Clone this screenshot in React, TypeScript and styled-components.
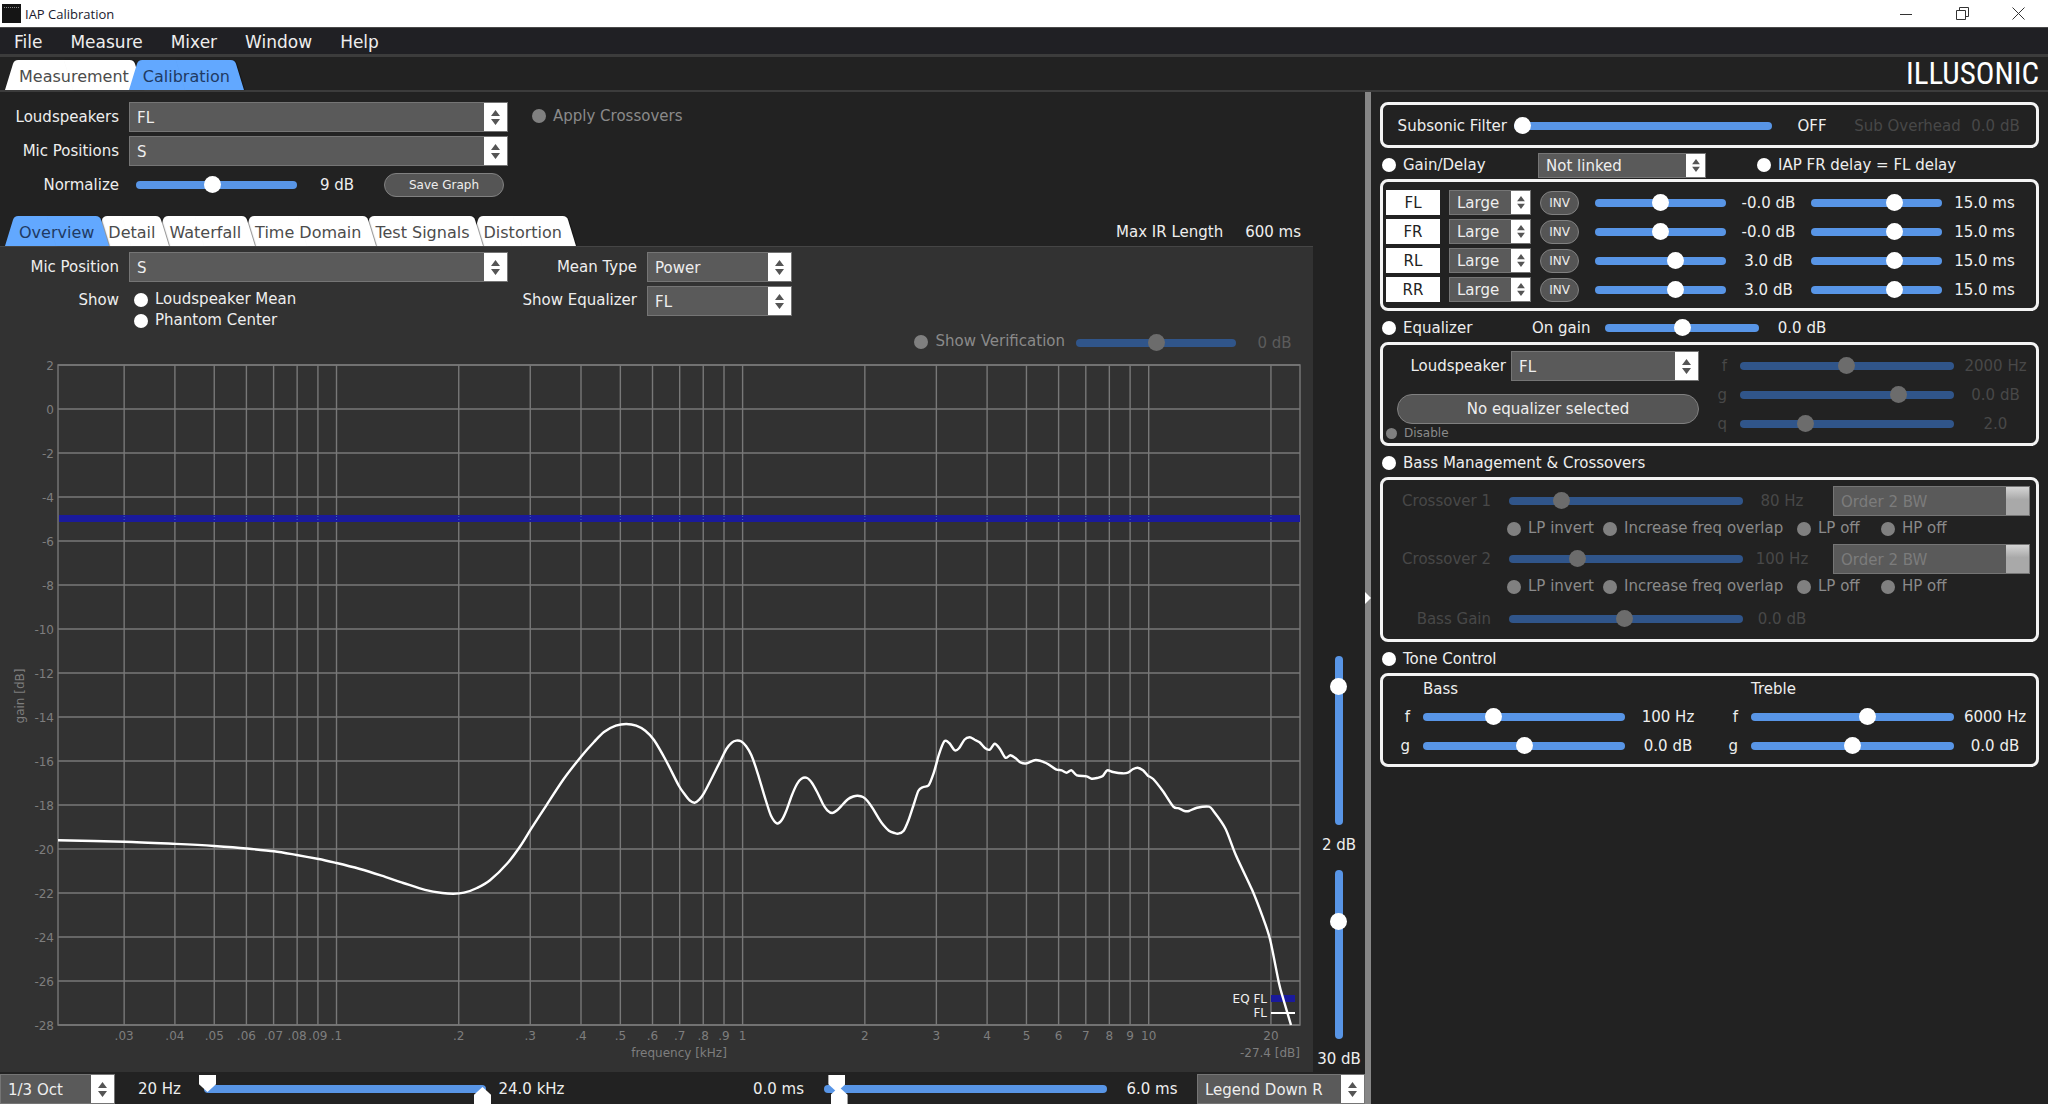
import React, { useId } from "react";
import styled, { createGlobalStyle, css } from "styled-components";

const c = {
  bg: "#222222",
  panel: "#323232",
  line: "#454545",
  field: "#5a5a5a",
  fieldLine: "#757575",
  blue: "#5895e6",
  blueOff: "#30558a",
  tab: "#62a8ff",
  text: "#eeeeee",
  muted: "#8a8a8a",
  faint: "#484848",
};

const GlobalStyle = createGlobalStyle`
  * { box-sizing: border-box; }
  body { margin: 0; background: ${c.bg}; }
  body, button, select, input {
    font-family: "DejaVu Sans", Verdana, sans-serif;
    font-size: 15px;
  }
`;

/* ---------- shell ---------- */

const Window = styled.div`
  display: flex;
  flex-direction: column;
  min-height: 100vh;
  color: ${c.text};
  line-height: 20px;
  white-space: nowrap;
`;

const TitleBar = styled.header`
  display: flex;
  align-items: center;
  height: 27px;
  padding: 0 2px;
  gap: 4px;
  background: #ffffff;
  color: #1a1a2e;
  font-family: "Open Sans", "Noto Sans", sans-serif;
  font-size: 13px;
`;

const WindowButtons = styled.div`
  display: flex;
  margin-left: auto;
`;

const WindowButton = styled.button`
  display: grid;
  place-items: center;
  width: 56px;
  height: 27px;
  padding: 0;
  border: 0;
  background: none;
`;

const MenuBar = styled.nav`
  display: flex;
  height: 30px;
  gap: 28px;
  padding: 2px 0 0 14px;
  background: #202024;
  border-top: 1px solid #4a4a4a;
  border-bottom: 3px solid #3c3c3c;
`;

const MenuButton = styled.button`
  padding: 0;
  border: 0;
  background: none;
  color: ${c.text};
  font-size: 17px;
`;

const Strip = styled.div`
  display: flex;
  align-items: flex-end;
  justify-content: space-between;
  height: 35px;
  border-bottom: 2px solid #3c3c3c;
`;

const Logo = styled.div`
  padding-right: 9px;
  align-self: center;
  color: #ffffff;
  font-family: "Roboto Condensed", "Open Sans Condensed", Lato, sans-serif;
  font-size: 31px;
  line-height: 33px;
`;

const Body = styled.main`
  flex: 1;
  display: grid;
  grid-template-columns: minmax(0, 1fr) 6px 677px;
`;

const Splitter = styled.div`
  display: flex;
  align-items: center;
  background: #868686;
`;

/* ---------- tabs ---------- */

const TabList = styled.div`
  display: flex;
  padding-left: 5px;
`;

const side = css`
  content: "";
  position: absolute;
  z-index: -1;
  top: 0;
  bottom: 0;
  width: 51%;
`;

const TabButton = styled.button<{ $active?: boolean; $order: number }>`
  position: relative;
  z-index: ${(p) => p.$order};
  isolation: isolate;
  height: 30px;
  padding: 3px 14px 0;
  border: 0;
  background: none;
  color: ${(p) => (p.$active ? "#1f3a63" : "#4c4c4c")};
  font-size: 16px;
  & + & { margin-left: -14px; }
  &::before {
    ${side}
    left: 0;
    background: ${(p) => (p.$active ? c.tab : "#ffffff")};
    border-top-left-radius: 4px;
    transform: skewX(-17deg);
    transform-origin: bottom left;
  }
  &::after {
    ${side}
    right: 0;
    background: ${(p) => (p.$active ? c.tab : "#ffffff")};
    border-top-right-radius: 4px;
    box-shadow: 1px 0 1px rgba(0, 0, 0, 0.45);
    transform: skewX(17deg);
    transform-origin: bottom right;
  }
`;

function Tabs({ names, active, label }: { names: string[]; active: string; label: string }) {
  return (
    <TabList role="tablist" aria-label={label}>
      {names.map((n, i) => (
        <TabButton
          key={n}
          role="tab"
          aria-selected={n === active}
          $active={n === active}
          $order={n === active ? names.length + 1 : names.length - i}
        >
          {n}
        </TabButton>
      ))}
    </TabList>
  );
}

/* ---------- controls ---------- */

const SelectBox = styled.span<{ $small?: boolean }>`
  display: grid;
  grid-template-columns: minmax(0, 1fr) ${(p) => (p.$small ? 19 : 23)}px;
  height: ${(p) => (p.$small ? 25 : 30)}px;
  background: ${c.field};
  border: 1px solid ${c.fieldLine};
`;

const NativeSelect = styled.select`
  grid-area: 1 / 1 / 2 / 3;
  min-width: 0;
  padding: 1px 0 0 7px;
  border: 0;
  appearance: none;
  background: none;
  color: ${c.text};
  opacity: 1;
  &:disabled { color: #7c7c7c; }
`;

const Stepper = styled.span<{ $off?: boolean }>`
  grid-area: 1 / 2;
  display: grid;
  place-items: center;
  pointer-events: none;
  background: ${(p) => (p.$off ? "linear-gradient(#d4d4d4, #a9a9a9 45%)" : "#ffffff")};
`;

function Select(p: { id?: string; value: string; label?: string; small?: boolean; disabled?: boolean }) {
  return (
    <SelectBox $small={p.small}>
      <NativeSelect id={p.id} aria-label={p.label} defaultValue={p.value} disabled={p.disabled}>
        <option>{p.value}</option>
      </NativeSelect>
      <Stepper $off={p.disabled}>
        {!p.disabled && (
          <svg width={p.small ? 8 : 9} height={p.small ? 13 : 15} viewBox="0 0 9 15" aria-hidden="true">
            <path d="M0 6 L4.5 0 L9 6Z M0 9 L4.5 15 L9 9Z" fill="#555" />
          </svg>
        )}
      </Stepper>
    </SelectBox>
  );
}

const track = css`
  width: 100%;
  height: 8px;
  border-radius: 4px;
  background: ${c.blue};
`;

const thumb = css`
  appearance: none;
  width: 17px;
  height: 17px;
  border: 0;
  border-radius: 50%;
  background: #ffffff;
`;

const Range = styled.input.attrs({ type: "range", min: 0, max: 1000 })`
  display: block;
  width: 100%;
  height: 18px;
  margin: 0;
  appearance: none;
  background: none;
  &::-webkit-slider-runnable-track { ${track} }
  &::-webkit-slider-thumb { ${thumb} margin-top: -5px; }
  &:disabled::-webkit-slider-runnable-track { background: ${c.blueOff}; }
  &:disabled::-webkit-slider-thumb { background: #6c6c6c; }
`;

const VerticalRange = styled(Range)`
  writing-mode: vertical-lr;
  width: 18px;
  height: 169px;
  &::-webkit-slider-runnable-track { width: 8px; height: 100%; }
  &::-webkit-slider-thumb { margin-top: 0; margin-left: -5px; }
`;

/* two handles share one bar; each handle centres on the bar's end */
const SpanBox = styled.div`
  display: grid;
  align-items: center;
  height: 30px;
  &::before {
    content: "";
    grid-area: 1 / 1;
    ${track}
  }
`;

const SpanRange = styled(Range)<{ $end?: boolean }>`
  grid-area: 1 / 1;
  width: auto;
  height: 30px;
  margin: 0 -5px;
  pointer-events: none;
  &::-webkit-slider-runnable-track { background: none; }
  &::-webkit-slider-thumb {
    pointer-events: auto;
    border-radius: 0;
    margin-top: ${(p) => (p.$end ? 2 : -10)}px;
    clip-path: ${(p) =>
      p.$end
        ? "polygon(50% 0, 100% 45%, 100% 100%, 0 100%, 0 45%)"
        : "polygon(0 0, 100% 0, 100% 55%, 50% 100%, 0 55%)"};
  }
`;

const DotLabel = styled.label<{ $off?: boolean; $small?: boolean }>`
  display: inline-flex;
  align-items: center;
  gap: 7px;
  color: ${(p) => (p.$off ? c.muted : c.text)};
  font-size: ${(p) => (p.$small ? 12 : 15)}px;
  line-height: ${(p) => (p.$small ? 16 : 21)}px;
`;

const Dot = styled.input.attrs({ type: "checkbox" })<{ $small?: boolean }>`
  appearance: none;
  flex: none;
  width: ${(p) => (p.$small ? 11 : 14)}px;
  height: ${(p) => (p.$small ? 11 : 14)}px;
  margin: 0;
  border-radius: 50%;
  background: #ffffff;
  &:disabled { background: #808080; }
`;

function Toggle({ text, off, small }: { text: string; off?: boolean; small?: boolean }) {
  return (
    <DotLabel $off={off} $small={small}>
      <Dot disabled={off} $small={small} />
      {text}
    </DotLabel>
  );
}

const Pill = styled.button<{ $size: "tiny" | "small" | "wide" }>`
  height: ${(p) => (p.$size === "wide" ? 30 : 24)}px;
  padding: 0;
  border: 1px solid #808080;
  border-radius: 15px;
  background: #555555;
  color: ${c.text};
  font-size: ${(p) => (p.$size === "wide" ? 15 : 12)}px;
`;

const Caption = styled.label<{ $faint?: boolean }>`
  text-align: right;
  color: ${(p) => (p.$faint ? c.faint : c.text)};
`;

const Value = styled.output<{ $faint?: boolean }>`
  text-align: center;
  color: ${(p) => (p.$faint ? c.faint : c.text)};
`;

const DimValue = styled(Value)`
  color: #5c5c5c;
`;

/* ---------- left pane ---------- */

const LeftPane = styled.section`
  display: flex;
  flex-direction: column;
  min-width: 0;
`;

const Form = styled.div`
  display: grid;
  grid-template-columns: 119px 379px auto;
  grid-auto-rows: 30px;
  align-items: center;
  gap: 4px 10px;
  padding-top: 10px;
`;

const FormAside = styled.div`
  padding-left: 14px;
`;

const NormalizeRow = styled.div`
  display: grid;
  grid-template-columns: 161px 80px 7px 120px;
  align-items: center;
  padding-left: 7px;
  & > button { grid-column: 4; }
`;

const TabStrip = styled.div`
  display: flex;
  align-items: center;
  justify-content: space-between;
  padding: 16px 64px 0 0;
`;

const IrLength = styled.div`
  display: flex;
  gap: 22px;
  padding-top: 2px;
`;

const Workspace = styled.div`
  display: flex;
`;

const GraphPanel = styled.div`
  flex: 1;
  min-width: 0;
  padding-top: 5px;
  background: ${c.panel};
  border-top: 1px solid ${c.line};
`;

const GraphForm = styled.div`
  display: grid;
  grid-template-columns: 119px 379px 119px 145px;
  align-items: center;
  gap: 4px 10px;
`;

const DotStack = styled.div`
  display: flex;
  flex-direction: column;
  align-items: flex-start;
  padding: 3px 0 0 5px;
`;

const TopAligned = styled.div`
  align-self: start;
  padding-top: 4px;
  text-align: right;
`;

const StartCell = styled.div`
  align-self: start;
`;

const Verification = styled.div`
  display: grid;
  grid-template-columns: auto 160px 77px;
  align-items: center;
  justify-content: end;
  height: 23px;
`;

const VerificationToggle = styled.div`
  padding-right: 11px;
`;

const Chart = styled.svg`
  display: block;
  width: 100%;
  height: auto;
  font-family: "DejaVu Sans", Verdana, sans-serif;
  font-size: 12px;
`;

const ScaleStrip = styled.div`
  display: flex;
  flex-direction: column;
  justify-content: flex-end;
  align-items: center;
  width: 52px;
  padding-bottom: 3px;
`;

const ScaleValue = styled.output`
  padding: 10px 0 15px;
  &:last-child { padding-bottom: 0; }
`;

const BottomBar = styled.div`
  display: grid;
  grid-template-columns: 115px 89px 282px 91px 1fr 91px 283px 90px 168px;
  align-items: center;
  padding-top: 2px;
`;

/* ---------- right pane ---------- */

const RightPane = styled.section`
  display: flex;
  flex-direction: column;
  padding: 10px 9px 0;
`;

const Group = styled.div`
  border: 3px solid #f4f4f4;
  border-radius: 8px;
`;

const SubsonicGroup = styled(Group)`
  display: grid;
  grid-template-columns: 131px 1fr 80px 111px 65px 8px;
  align-items: center;
  padding: 11px 0 9px;
`;

const SubsonicCaption = styled(Caption)`
  padding-right: 7px;
`;

const Head = styled.div<{ $cols?: string }>`
  display: grid;
  grid-template-columns: ${(p) => p.$cols ?? "auto"};
  align-items: center;
  height: 31px;
  padding: 3px 0 0 2px;
`;

const Channels = styled(Group)`
  padding: 6px 0 4px 3px;
`;

const ChannelRow = styled.div`
  display: grid;
  grid-template-columns: 54px 9px 82px 9px 39px 16px 1fr 85px 131px 94px;
  align-items: center;
  height: 29px;
  & > :nth-child(2) { grid-column: 3; }
  & > :nth-child(3) { grid-column: 5; }
  & > :nth-child(4) { grid-column: 7; }
`;

const ChannelName = styled.button`
  height: 25px;
  padding: 0;
  border: 0;
  background: #ffffff;
  color: #222222;
`;

const Delay = styled(Value)`
  padding-right: 9px;
`;

const EqGroup = styled(Group)`
  display: grid;
  grid-template-columns: 316px 1fr;
  padding-top: 6px;
`;

const EqLeft = styled.div`
  display: flex;
  flex-direction: column;
`;

const EqPick = styled.div`
  display: grid;
  grid-template-columns: 123px 188px;
  gap: 5px;
  align-items: center;
`;

const EqButtons = styled.div`
  display: grid;
  padding: 13px 0 1px 14px;
`;

const EqDisable = styled.div`
  display: flex;
  padding: 0 0 2px 3px;
`;

const ParamRow = styled.div`
  display: grid;
  grid-template-columns: 41px 1fr 4px 75px 3px;
  align-items: center;
  height: 29px;
  & > label { padding-right: 13px; }
  & > output { grid-column: 4; }
`;

const CrossRow = styled.div`
  display: grid;
  grid-template-columns: 108px 18px 1fr 78px 12px 197px;
  align-items: center;
  height: 30px;
  & > input { grid-column: 3; }
  & > output { grid-column: 4; }
  & > span { grid-column: 6; }
`;

const BassGroup = styled(Group)`
  padding: 6px 6px 3px 0;
  & > :last-child { height: 34px; }
`;

const DotRow = styled.div`
  display: grid;
  grid-template-columns: 96px 194px 84px 1fr;
  align-items: center;
  height: 28px;
  padding: 0 0 3px 124px;
`;

const ToneGroup = styled(Group)`
  display: grid;
  grid-template-columns: 328px 1fr;
  padding-bottom: 4px;
`;

const ToneTitle = styled.div`
  height: 26px;
  padding: 3px 0 0 40px;
`;

const ToneRow = styled.div<{ $valueWidth: number }>`
  display: grid;
  grid-template-columns: 40px 1fr ${(p) => p.$valueWidth}px;
  align-items: center;
  height: 29px;
  & > label { padding-right: 13px; }
`;

/* ---------- chart data ---------- */

const PLOT = { left: 58, right: 1300, top: 365, bottom: 1025 };
const xOf = (hz: number) => 336.5 + 406.1 * Math.log10(hz / 100);
const yOf = (db: number) => PLOT.top + (2 - db) * 22;

const TICKS: [number, string][] = [
  [30, ".03"], [40, ".04"], [50, ".05"], [60, ".06"], [70, ".07"], [80, ".08"], [90, ".09"], [100, ".1"],
  [200, ".2"], [300, ".3"], [400, ".4"], [500, ".5"], [600, ".6"], [700, ".7"], [800, ".8"], [900, ".9"],
  [1000, "1"], [2000, "2"], [3000, "3"], [4000, "4"], [5000, "5"], [6000, "6"], [7000, "7"], [8000, "8"],
  [9000, "9"], [10000, "10"], [20000, "20"],
];
const LEVELS = Array.from({ length: 16 }, (_, i) => 2 - i * 2);

const RESPONSE: [number, number][] = [
  [58, 840.3], [124, 841.7], [175.6, 843.9], [214, 846], [246.3, 848.5], [274, 851.3], [296.6, 855], [318.7, 859],
  [336.5, 863], [360, 869], [381.6, 875.7], [403.3, 883], [425, 889.9], [442.3, 893], [453.2, 893.7], [464, 892.7],
  [477, 888], [490, 880.3], [507.4, 863.3], [520.4, 846], [531.2, 828.7], [546.4, 805.3], [563.7, 779], [581, 756.7],
  [594, 742], [604, 732], [615.8, 725.7], [626.2, 724], [636.2, 725.7], [645.3, 730.7], [654, 740], [665.7, 760],
  [679, 786], [685.4, 795.3], [689.8, 800.5], [694.7, 802.7], [699.2, 799.7], [703.7, 793.7], [712, 777.7], [721, 759.7],
  [726.4, 749], [731.8, 742.7], [736.3, 740.6], [741, 741.3], [746, 746], [751.4, 755.3], [758, 774.3], [765.7, 800],
  [771, 815.7], [776.9, 823.3], [781.8, 820], [786.3, 810.7], [791.6, 796], [797, 784], [801.4, 778.7], [807.2, 778],
  [812, 783], [817.5, 792.7], [822.9, 804], [827.3, 810.3], [832.2, 813], [837.1, 810.3], [842.5, 804.7], [847.9, 799.3],
  [853.2, 796.5], [857.7, 795.7], [863, 797], [867.5, 801], [872.9, 808.7], [878.7, 818.3], [883.6, 825.3], [888.9, 830.7],
  [894.3, 833], [898.3, 833.7], [903.7, 830.7], [908.6, 820], [913.9, 804], [918.4, 790.7], [923.3, 787], [928.7, 785.3],
  [933.6, 773.3], [938.9, 754.7], [944.3, 741.3], [949.2, 743], [954.6, 750.3], [959, 748.3], [964.4, 739.7], [969.7, 737.3],
  [974.6, 739.7], [979.6, 742.3], [984.9, 748], [989.8, 749.7], [994.7, 743.7], [1000, 749], [1005.4, 757.7], [1010.4, 755.3],
  [1015.7, 758.3], [1021, 762.7], [1026.9, 763.3], [1035.8, 760], [1046, 763], [1055.9, 769.3], [1061.7, 770.3],
  [1066.6, 772.7], [1071.5, 770.3], [1076.9, 775.3], [1086.7, 776.3], [1091.6, 778.7], [1097, 778], [1102.8, 776],
  [1107.2, 770.3], [1113, 772], [1122, 773.3], [1128, 772.7], [1132.7, 769.3], [1137.6, 767.7], [1143, 770.3],
  [1147.9, 775.7], [1153.2, 779], [1163, 791.3], [1173.3, 806.7], [1179, 808.3], [1184.5, 811], [1189, 811],
  [1197, 807.7], [1209, 806.7], [1214, 811.7], [1225.5, 828.7], [1235.8, 855], [1252.3, 890.3], [1262.6, 916.7],
  [1270.2, 940], [1279, 983.3], [1283.6, 1000], [1291, 1025],
];

/* Catmull-Rom spline through the response points */
const curve = RESPONSE.slice(1).reduce((d, p, i) => {
  const a = RESPONSE[Math.max(i - 1, 0)];
  const b = RESPONSE[i];
  const e = RESPONSE[Math.min(i + 2, RESPONSE.length - 1)];
  const f = (n: number) => n.toFixed(1);
  return `${d}C${f(b[0] + (p[0] - a[0]) / 7)} ${f(b[1] + (p[1] - a[1]) / 7)} ${f(p[0] - (e[0] - b[0]) / 7)} ${f(
    p[1] - (e[1] - b[1]) / 7
  )} ${p[0]} ${p[1]}`;
}, `M${RESPONSE[0][0]} ${RESPONSE[0][1]}`);

function ResponseChart() {
  return (
    <Chart viewBox="0 354 1313 718" role="img" aria-label="Frequency response">
      <g stroke="#787878" strokeWidth="1.4">
        {LEVELS.map((db) => (
          <line key={db} x1={PLOT.left} x2={PLOT.right} y1={yOf(db)} y2={yOf(db)} />
        ))}
        {TICKS.map(([hz]) => (
          <line key={hz} x1={xOf(hz)} x2={xOf(hz)} y1={PLOT.top} y2={PLOT.bottom} />
        ))}
        <rect x={PLOT.left} y={PLOT.top} width={PLOT.right - PLOT.left} height={PLOT.bottom - PLOT.top} fill="none" />
      </g>
      <rect x={PLOT.left + 1} y="515" width={PLOT.right - PLOT.left - 1} height="7" fill="#1a1a9c" />
      <g stroke="#3c6fb4" strokeDasharray="1 2">
        {TICKS.map(([hz]) => (
          <line key={hz} x1={xOf(hz)} x2={xOf(hz)} y1="516" y2="522" />
        ))}
      </g>
      <rect x="1271" y="995" width="24" height="7" fill="#1a1a9c" />
      <path d="M1271 1013H1295" stroke="#fff" strokeWidth="2" />
      <path d={curve} fill="none" stroke="#fff" strokeWidth="2.4" strokeLinejoin="round" />
      <g fill="#7e7e7e">
        {LEVELS.map((db) => (
          <text key={db} x="54" y={yOf(db) + 5} textAnchor="end">{db}</text>
        ))}
        {TICKS.map(([hz, t]) => (
          <text key={hz} x={xOf(hz)} y="1040" textAnchor="middle">{t}</text>
        ))}
        <text x="679" y="1057" textAnchor="middle">frequency [kHz]</text>
        <text x="1300" y="1057" textAnchor="end">-27.4 [dB]</text>
        <text transform="translate(24 696) rotate(-90)" textAnchor="middle">gain [dB]</text>
      </g>
      <g fill="#f0f0f0" textAnchor="end">
        <text x="1267" y="1003">EQ FL</text>
        <text x="1267" y="1017">FL</text>
      </g>
    </Chart>
  );
}

/* ---------- rows ---------- */

function Param({ name, pos, value, off }: { name: string; pos: number; value: string; off?: boolean }) {
  const id = useId();
  return (
    <ParamRow>
      <Caption htmlFor={id} $faint={off}>{name}</Caption>
      <Range id={id} defaultValue={pos} disabled={off} />
      <Value $faint={off}>{value}</Value>
    </ParamRow>
  );
}

function ToneParam(p: { name: string; pos: number; value: string; valueWidth: number }) {
  const id = useId();
  return (
    <ToneRow $valueWidth={p.valueWidth}>
      <Caption htmlFor={id}>{p.name}</Caption>
      <Range id={id} defaultValue={p.pos} />
      <Value>{p.value}</Value>
    </ToneRow>
  );
}

function Crossover({ name, pos, value, order }: { name: string; pos: number; value: string; order?: string }) {
  const id = useId();
  return (
    <CrossRow>
      <Caption htmlFor={id} $faint>{name}</Caption>
      <Range id={id} defaultValue={pos} disabled />
      <Value $faint>{value}</Value>
      {order && <Select value={order} label={`${name} order`} disabled />}
    </CrossRow>
  );
}

function CrossoverToggles() {
  return (
    <DotRow>
      {["LP invert", "Increase freq overlap", "LP off", "HP off"].map((t) => (
        <Toggle key={t} text={t} off />
      ))}
    </DotRow>
  );
}

const CHANNELS = [
  { name: "FL", pos: 497, gain: "-0.0 dB" },
  { name: "FR", pos: 497, gain: "-0.0 dB" },
  { name: "RL", pos: 630, gain: "3.0 dB" },
  { name: "RR", pos: 630, gain: "3.0 dB" },
];

export default function App() {
  return (
    <Window>
      <GlobalStyle />
      <TitleBar>
        <svg width="19" height="19" viewBox="0 0 19 19" aria-hidden="true">
          <rect width="19" height="19" fill="#151515" />
          <path d="M2 3.500H17" stroke="#8a8a8a" strokeDasharray="1 1" />
        </svg>
        IAP Calibration
        <WindowButtons>
          <WindowButton aria-label="Minimize">
            <svg width="12" height="12"><path d="M0 6.500H12" stroke="#333" /></svg>
          </WindowButton>
          <WindowButton aria-label="Restore">
            <svg width="13" height="13" fill="none" stroke="#333">
              <path d="M.5 3.500H9.500V12.500H.5ZM3.500 3.500V.5H12.500V9.500H9.500" />
            </svg>
          </WindowButton>
          <WindowButton aria-label="Close">
            <svg width="13" height="13"><path d="M.5 .5L12.500 12.500M12.500 .5L.5 12.500" stroke="#333" /></svg>
          </WindowButton>
        </WindowButtons>
      </TitleBar>
      <MenuBar>
        {["File", "Measure", "Mixer", "Window", "Help"].map((m) => (
          <MenuButton key={m}>{m}</MenuButton>
        ))}
      </MenuBar>
      <Strip>
        <Tabs names={["Measurement", "Calibration"]} active="Calibration" label="Mode" />
        <Logo>ILLUSONIC</Logo>
      </Strip>

      <Body>
        <LeftPane>
          <Form>
            <Caption htmlFor="speakers">Loudspeakers</Caption>
            <Select id="speakers" value="FL" />
            <FormAside><Toggle text="Apply Crossovers" off /></FormAside>
            <Caption htmlFor="mics">Mic Positions</Caption>
            <Select id="mics" value="S" />
            <span />
            <Caption htmlFor="normalize">Normalize</Caption>
            <NormalizeRow>
              <Range id="normalize" defaultValue={472} />
              <Value>9 dB</Value>
              <Pill $size="small">Save Graph</Pill>
            </NormalizeRow>
          </Form>
          <TabStrip>
            <Tabs
              names={["Overview", "Detail", "Waterfall", "Time Domain", "Test Signals", "Distortion"]}
              active="Overview"
              label="Graph"
            />
            <IrLength>
              <span>Max IR Length</span>
              <span>600 ms</span>
            </IrLength>
          </TabStrip>
          <Workspace>
            <GraphPanel>
              <GraphForm>
                <Caption htmlFor="mic">Mic Position</Caption>
                <Select id="mic" value="S" />
                <Caption htmlFor="mean">Mean Type</Caption>
                <Select id="mean" value="Power" />
                <TopAligned>Show</TopAligned>
                <DotStack>
                  <Toggle text="Loudspeaker Mean" />
                  <Toggle text="Phantom Center" />
                </DotStack>
                <TopAligned><Caption htmlFor="eq">Show Equalizer</Caption></TopAligned>
                <StartCell><Select id="eq" value="FL" /></StartCell>
              </GraphForm>
              <Verification>
                <VerificationToggle><Toggle text="Show Verification" off /></VerificationToggle>
                <Range aria-label="Verification offset" defaultValue={500} disabled />
                <DimValue>0 dB</DimValue>
              </Verification>
              <ResponseChart />
            </GraphPanel>
            <ScaleStrip>
              <VerticalRange aria-label="Top level" defaultValue={142} />
              <ScaleValue>2 dB</ScaleValue>
              <VerticalRange aria-label="Level range" defaultValue={284} />
              <ScaleValue>30 dB</ScaleValue>
            </ScaleStrip>
          </Workspace>
          <BottomBar>
            <Select value="1/3 Oct" label="Smoothing" />
            <Value>20 Hz</Value>
            <SpanBox>
              <SpanRange aria-label="Lowest frequency" defaultValue={0} />
              <SpanRange aria-label="Highest frequency" defaultValue={1000} $end />
            </SpanBox>
            <Value>24.0 kHz</Value>
            <span />
            <Value>0.0 ms</Value>
            <SpanBox>
              <SpanRange aria-label="Window start" defaultValue={34} />
              <SpanRange aria-label="Window end" defaultValue={42} $end />
            </SpanBox>
            <Value>6.0 ms</Value>
            <Select value="Legend Down R" label="Legend position" />
          </BottomBar>
        </LeftPane>

        <Splitter>
          <svg width="6" height="12" aria-hidden="true"><path d="M0 0L6 6L0 12Z" fill="#fff" /></svg>
        </Splitter>

        <RightPane>
          <SubsonicGroup>
            <SubsonicCaption htmlFor="subsonic">Subsonic Filter</SubsonicCaption>
            <Range id="subsonic" defaultValue={0} />
            <Value>OFF</Value>
            <Value $faint>Sub Overhead</Value>
            <Value $faint>0.0 dB</Value>
          </SubsonicGroup>

          <Head $cols="156px 168px 51px 1fr">
            <Toggle text="Gain/Delay" />
            <Select value="Not linked" label="Gain link" small />
            <span />
            <Toggle text="IAP FR delay = FL delay" />
          </Head>
          <Channels>
            {CHANNELS.map((ch) => (
              <ChannelRow key={ch.name}>
                <ChannelName>{ch.name}</ChannelName>
                <Select value="Large" label={`${ch.name} size`} small />
                <Pill $size="tiny">INV</Pill>
                <Range aria-label={`${ch.name} gain`} defaultValue={ch.pos} />
                <Value>{ch.gain}</Value>
                <Range aria-label={`${ch.name} delay`} defaultValue={662} />
                <Delay>15.0 ms</Delay>
              </ChannelRow>
            ))}
          </Channels>

          <Head $cols="150px 73px 154px 86px">
            <Toggle text="Equalizer" />
            <label htmlFor="on-gain">On gain</label>
            <Range id="on-gain" defaultValue={500} />
            <Value>0.0 dB</Value>
          </Head>
          <EqGroup>
            <EqLeft>
              <EqPick>
                <Caption htmlFor="eq-speaker">Loudspeaker</Caption>
                <Select id="eq-speaker" value="FL" />
              </EqPick>
              <EqButtons><Pill $size="wide">No equalizer selected</Pill></EqButtons>
              <EqDisable><Toggle text="Disable" off small /></EqDisable>
            </EqLeft>
            <div>
              <Param name="f" pos={498} value="2000 Hz" off />
              <Param name="g" pos={760} value="0.0 dB" off />
              <Param name="q" pos={291} value="2.0" off />
            </div>
          </EqGroup>

          <Head><Toggle text="Bass Management &amp; Crossovers" /></Head>
          <BassGroup>
            <Crossover name="Crossover 1" pos={202} value="80 Hz" order="Order 2 BW" />
            <CrossoverToggles />
            <Crossover name="Crossover 2" pos={275} value="100 Hz" order="Order 2 BW" />
            <CrossoverToggles />
            <Crossover name="Bass Gain" pos={495} value="0.0 dB" />
          </BassGroup>

          <Head><Toggle text="Tone Control" /></Head>
          <ToneGroup>
            <div>
              <ToneTitle>Bass</ToneTitle>
              <ToneParam name="f" pos={334} value="100 Hz" valueWidth={86} />
              <ToneParam name="g" pos={500} value="0.0 dB" valueWidth={86} />
            </div>
            <div>
              <ToneTitle>Treble</ToneTitle>
              <ToneParam name="f" pos={580} value="6000 Hz" valueWidth={82} />
              <ToneParam name="g" pos={500} value="0.0 dB" valueWidth={82} />
            </div>
          </ToneGroup>
        </RightPane>
      </Body>
    </Window>
  );
}
